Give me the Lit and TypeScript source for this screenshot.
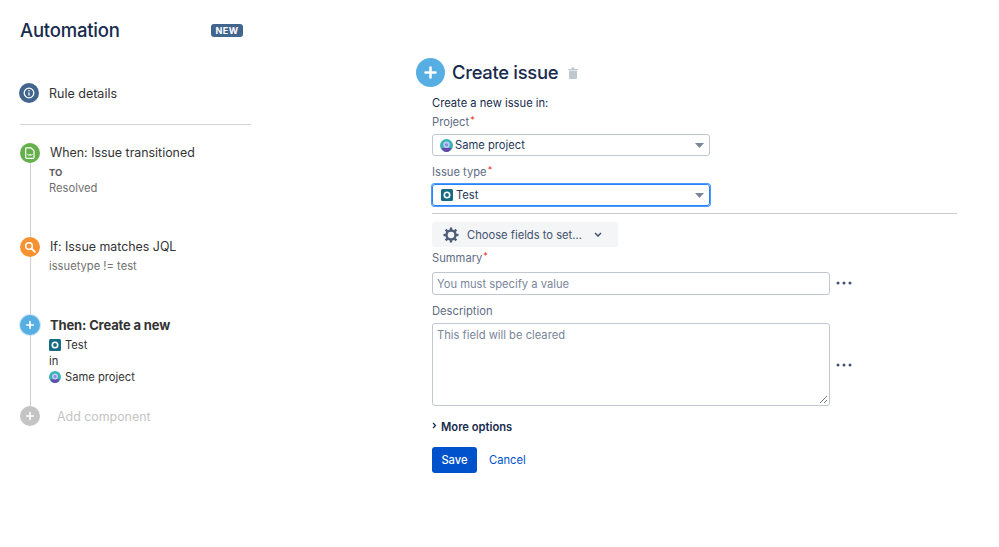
import { LitElement, html, css, svg } from "lit";
import { customElement } from "lit/decorators.js";

const testIcon = (s: number) => html`<svg width=${s} height=${s} viewBox="0 0 12 12"><rect width="12" height="12" rx="1.500" fill="#146b82"/><circle cx="6" cy="6" r="2.700" fill="none" stroke="#fff" stroke-width="1.600"/></svg>`;
const projIcon = (s: number) => html`<svg width=${s} height=${s} viewBox="0 0 12 12"><circle cx="6" cy="6" r="6" fill="#35b5b8"/><path d="M1.500 8.200h9A5.400 5.400 0 0 1 6 12a5.400 5.400 0 0 1-4.500-3.800z" fill="#6b45ad"/><circle cx="6" cy="5.400" r="3" fill="#c9c6ef"/><circle cx="6" cy="5.400" r="1.500" fill="#7f93d8"/></svg>`;
const plus = (s: number) => html`<svg width=${s} height=${s} viewBox="0 0 12 12"><path d="M6 2v8M2 6h8" stroke="#fff" stroke-width="2" stroke-linecap="round"/></svg>`;
const caret = html`<svg class="caret" width="9" height="5" viewBox="0 0 9 5"><path d="M0 0h9L4.500 5z" fill="#7a869a"/></svg>`;
const dots = (cls: string) => html`<svg class="dots ${cls}" width="16" height="4" viewBox="0 0 16 4"><circle cx="2" cy="2" r="1.500"/><circle cx="8" cy="2" r="1.500"/><circle cx="14" cy="2" r="1.500"/></svg>`;
const gearTeeth = [0, 45, 90, 135, 180, 225, 270, 315].map(
  (a) => svg`<rect x="6.800" y="0.500" width="2.400" height="3" fill="#4d5d78" transform="rotate(${a} 8 8)"/>`
);

@customElement("app-root")
export class AppRoot extends LitElement {
  static styles = css`
    :host { display: block; width: 999px; height: 547px; overflow: hidden; background: #fff; font-family: Inter, "Liberation Sans", sans-serif; color: #172b4d; font-size: 11.200px; }
    * { box-sizing: border-box; }
    svg { display: block; flex: none; }
    .page { display: grid; grid-template-columns: 416px 1fr; height: 100%; }
    .side { padding: 17px 0 0 20px; width: 251px; }
    .head { display: flex; align-items: center; justify-content: space-between; height: 26px; width: 223px; }
    .head h1 { margin: 0; font-size: 18.500px; font-weight: 500; letter-spacing: -0.200px; }
    .new { background: #42658e; color: #fff; font-size: 9px; font-weight: 700; letter-spacing: 0.500px; border-radius: 3px; height: 13px; width: 32px; display: flex; align-items: center; justify-content: center; }
    .details { display: flex; align-items: center; gap: 10px; margin: 39px 0 0 -1px; height: 22px; font-size: 12.500px; color: #333; }
    .circle { width: 20px; height: 20px; border-radius: 50%; display: flex; align-items: center; justify-content: center; flex: none; }
    .info { background: #42658e; }
    hr.rule { border: 0; height: 1px; background: #d0d3d8; margin: 20px 0 18px; }
    .step { display: grid; grid-template-columns: 20px 1fr; column-gap: 10px; }
    .rail { display: flex; flex-direction: column; align-items: center; }
    .line { flex: 1; width: 1px; background: #ccd0d5; }
    .title { font-size: 12.400px; line-height: 18px; color: #333; padding-top: 1px; }
    .title.b { font-weight: 700; letter-spacing: -0.150px; font-size: 13px; padding-top: 0; margin-top: 1px; }
    .sub { font-size: 11.200px; line-height: 16px; color: #707070; margin-left: -1px; }
    .to { font-size: 9.500px; font-weight: 700; color: #5b5b5b; line-height: 15px; margin-top: 3px; margin-left: -1px; }
    .issuetype { margin-top: 2px; }
    .s1 { height: 94px; } .s2 { height: 78px; } .s3 { height: 91px; }
    .row { display: flex; align-items: center; gap: 4px; font-size: 11.200px; color: #333; line-height: 16px; margin-left: -1px; }
    .rows { margin-top: 3px; }
    .add { color: #c4c4c4; font-size: 12.400px; margin: 1px 0 0 7px; line-height: 20px; }
    .green { background: #64b04a; } .orange { background: #f79232; } .blue { background: #56aee3; box-shadow: 0 0 0 1px #d0e6f6; }
    .grey { background: #c4c4c4; }
    .main { padding-top: 57px; width: 541px; }
    .mhead { display: flex; align-items: center; height: 30px; }
    .bigplus { width: 29px; height: 29px; border-radius: 50%; background: #56aee3; display: flex; align-items: center; justify-content: center; }
    .mhead h2 { margin: 0 0 0 7px; font-size: 18.400px; font-weight: 500; letter-spacing: -0.300px; }
    .trash { margin-left: 10px; margin-top: 2px; }
    .form { padding: 8px 0 0 16px; }
    .lead { line-height: 16px; }
    .lab { line-height: 16px; color: #5e6c84; margin-top: 3px; }
    .lab i { color: #de350b; font-style: normal; font-size: 9px; position: relative; top: -3px; margin-left: 1px; }
    .sel { width: 278px; height: 22px; border: 1px solid #c1c7d0; border-radius: 3px; display: flex; align-items: center; padding: 0 5px 0 7px; gap: 2px; color: #253858; margin-top: 3px; }
    .sel.focus { border-color: #2684ff; box-shadow: 0 0 0 1px #4c9aff; }
    .sel .tt { margin-left: 1px; }
    .sel .tt2 { margin-left: 1px; }
    .caret { margin-left: auto; }
    .mt { margin-top: 8px; }
    hr.sep { border: 0; height: 1px; width: 525px; background: #c8ccd2; margin: 7px 0 0; }
    .choose { margin-top: 8px; width: 186px; height: 25px; background: #f4f5f7; border-radius: 3px; display: flex; align-items: center; padding-left: 11px; color: #42526e; }
    .choose span { margin-left: 8px; }
    .choose .chev { margin-left: 12px; }
    .sum { margin-top: 3px; line-height: 16px; color: #5e6c84; }
    .field { display: flex; align-items: center; gap: 6px; }
    .input { width: 398px; border: 1px solid #c1c7d0; border-radius: 3px; padding: 0 4px; color: #7a869a; }
    .one { height: 23px; display: flex; align-items: center; margin-top: 5px; }
    .area { height: 83px; position: relative; padding-top: 4px; line-height: 15px; margin-top: 4px; }
    .grip { position: absolute; right: 1px; bottom: 1px; }
    .dots { fill: #42526e; }
    .d1 { margin-top: 3px; }
    .d2 { margin-top: 4px; }
    .dlab { margin-top: 8px; line-height: 16px; color: #5e6c84; }
    .more { display: flex; align-items: center; gap: 4px; margin-top: 13px; height: 16px; font-weight: 600; color: #172b4d; }
    .more svg { margin-top: -3px; }
    .actions { display: flex; align-items: center; gap: 12px; margin-top: 12px; }
    .save { width: 45px; height: 26px; border-radius: 3px; background: #0052cc; color: #fff; display: flex; align-items: center; justify-content: center; font-weight: 500; }
    .cancel { color: #0052cc; }
  `;

  render() {
    return html`<div class="page">
      <aside class="side">
        <div class="head"><h1>Automation</h1><div class="new">NEW</div></div>
        <div class="details">
          <div class="circle info"><svg width="12" height="12" viewBox="0 0 12 12"><circle cx="6" cy="6" r="4.800" fill="none" stroke="#fff" stroke-width="1.300"/><path d="M6 5.500v3" stroke="#fff" stroke-width="1.300"/><circle cx="6" cy="3.700" r=".8" fill="#fff"/></svg></div>
          Rule details
        </div>
        <hr class="rule" />
        <div class="step s1">
          <div class="rail">
            <div class="circle green"><svg width="10" height="12" viewBox="0 0 10 12"><path d="M1.500.8h4.500l3 3v6.700a.8.8 0 0 1-.8.8H1.500a.8.8 0 0 1-.8-.8V1.600a.8.8 0 0 1 .8-.8z" fill="none" stroke="#fff" stroke-width="1.200"/><path d="M2.500 7l1.500 1.600L5 7l1 1.600L7.500 7" fill="none" stroke="#fff"/></svg></div>
            <div class="line"></div>
          </div>
          <div>
            <div class="title">When: Issue transitioned</div>
            <div class="to">TO</div>
            <div class="sub">Resolved</div>
          </div>
        </div>
        <div class="step s2">
          <div class="rail">
            <div class="circle orange"><svg width="12" height="12" viewBox="0 0 12 12"><circle cx="5" cy="5" r="3.300" fill="none" stroke="#fff" stroke-width="1.500"/><path d="M7.500 7.500l3.300 3.300" stroke="#fff" stroke-width="1.800" stroke-linecap="round"/></svg></div>
            <div class="line"></div>
          </div>
          <div>
            <div class="title">If: Issue matches JQL</div>
            <div class="sub issuetype">issuetype != test</div>
          </div>
        </div>
        <div class="step s3">
          <div class="rail">
            <div class="circle blue">${plus(10)}</div>
            <div class="line"></div>
          </div>
          <div>
            <div class="title b">Then: Create a new</div>
            <div class="rows">
              <div class="row">${testIcon(12)} Test</div>
              <div class="row">in</div>
              <div class="row">${projIcon(12)} Same project</div>
            </div>
          </div>
        </div>
        <div class="step">
          <div class="rail"><div class="circle grey">${plus(10)}</div></div>
          <div class="add">Add component</div>
        </div>
      </aside>
      <main class="main">
        <div class="mhead">
          <div class="bigplus">${plus(15)}</div>
          <h2>Create issue</h2>
          <svg class="trash" width="10" height="12" viewBox="0 0 10 12"><path d="M0 2h10v1H0zM3.500.5h3V2h-3zM1 3.500h8V11a1 1 0 0 1-1 1H2a1 1 0 0 1-1-1z" fill="#c1c7d0"/></svg>
        </div>
        <div class="form">
          <div class="lead">Create a new issue in:</div>
          <div class="lab">Project<i>*</i></div>
          <div class="sel">${projIcon(13)}<span>Same project</span>${caret}</div>
          <div class="lab mt">Issue type<i>*</i></div>
          <div class="sel focus"><span class="tt">${testIcon(12)}</span><span class="tt2">Test</span>${caret}</div>
          <hr class="sep" />
          <div class="choose">
            <svg width="16" height="16" viewBox="0 0 16 16">${gearTeeth}<circle cx="8" cy="8" r="4.500" fill="none" stroke="#4d5d78" stroke-width="2.400"/></svg>
            <span>Choose fields to set...</span>
            <svg class="chev" width="8" height="5" viewBox="0 0 8 5"><path d="M1 1l3 3 3-3" fill="none" stroke="#42526e" stroke-width="1.500"/></svg>
          </div>
          <div class="sum">Summary<span class="lab"><i>*</i></span></div>
          <div class="field"><div class="input one">You must specify a value</div>${dots("d1")}</div>
          <div class="dlab">Description</div>
          <div class="field">
            <div class="input area">This field will be cleared
              <svg class="grip" width="9" height="9" viewBox="0 0 9 9"><path d="M1 8l7-7M5 8l3-3" stroke="#777" stroke-width="1"/></svg>
            </div>
            ${dots("d2")}
          </div>
          <div class="more"><svg width="5" height="7" viewBox="0 0 5 7"><path d="M1 1l2.500 2.500L1 6" fill="none" stroke="#172b4d" stroke-width="1.200"/></svg>More options</div>
          <div class="actions"><div class="save">Save</div><div class="cancel">Cancel</div></div>
        </div>
      </main>
    </div>`;
  }
}
